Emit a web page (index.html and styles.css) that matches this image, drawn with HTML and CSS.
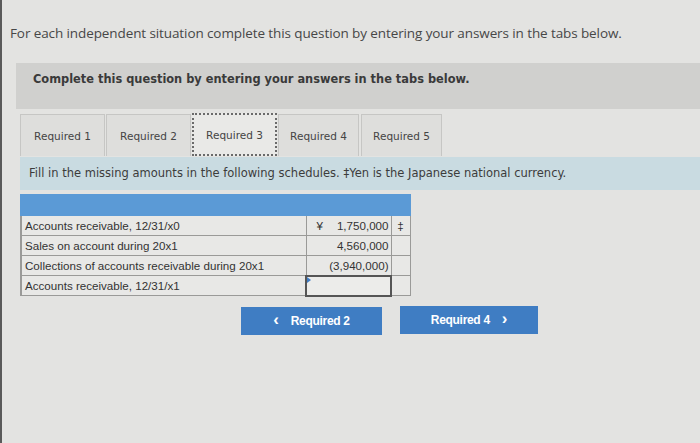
FILE: index.html
```html
<!DOCTYPE html>
<html>
<head>
<meta charset="utf-8">
<link rel="stylesheet" href="styles.css">
</head>
<body>
<div class="page">
  <p class="title">For each independent situation complete this question by entering your answers in the tabs below.</p>
  <div class="band">Complete this question by entering your answers in the tabs below.</div>
  <div class="content">
    <div class="tabs">
      <div class="tab t1">Required 1</div>
      <div class="tab t2">Required 2</div>
      <div class="tab t3 active">Required 3</div>
      <div class="tab t4">Required 4</div>
      <div class="tab t5">Required 5</div>
    </div>
    <div class="instr">Fill in the missing amounts in the following schedules. ‡Yen is the Japanese national currency.</div>
    <table class="sched">
      <tr class="head"><td colspan="3"></td></tr>
      <tr>
        <td class="label">Accounts receivable, 12/31/x0</td>
        <td class="val"><span class="cur">¥</span><span>1,750,000</span></td>
        <td class="sym">‡</td>
      </tr>
      <tr>
        <td class="label">Sales on account during 20x1</td>
        <td class="val"><span></span><span>4,560,000</span></td>
        <td class="sym"></td>
      </tr>
      <tr>
        <td class="label">Collections of accounts receivable during 20x1</td>
        <td class="val"><span></span><span>(3,940,000)</span></td>
        <td class="sym"></td>
      </tr>
      <tr>
        <td class="label">Accounts receivable, 12/31/x1</td>
        <td class="val input"><span class="tri"></span></td>
        <td class="sym"></td>
      </tr>
    </table>
    <div class="nav">
      <div class="btn prev"><span class="chev">&lsaquo;</span>Required 2</div>
      <div class="btn next">Required 4<span class="chev">&rsaquo;</span></div>
    </div>
  </div>
</div>
</body>
</html>
```

FILE: styles.css
```css
html, body {
  margin: 0;
  padding: 0;
  height: 100%;
}
body {
  background: #e3e3e1;
}
.page {
  height: 443px;
  border-left: 2px solid #5a5a5a;
  box-sizing: border-box;
  overflow: hidden;
}
.title {
  margin: 0;
  padding: 24px 0 0 8px;
  font-family: "Open Sans", sans-serif;
  font-size: 13.5px;
  letter-spacing: -0.1px;
  color: #474747;
  line-height: 18px;
}
.band {
  margin: 21px 0 0 14px;
  height: 46px;
  background: #d0d0ce;
  font-family: "DejaVu Sans", sans-serif;
  font-weight: bold;
  font-size: 11.4px;
  color: #3a3a3a;
  padding-left: 17px;
  line-height: 32px;
  box-sizing: border-box;
}
.content {
  margin-left: 18px;
}
.tabs {
  display: flex;
  margin-top: 4px;
  gap: 1px;
  height: 43px;
  align-items: flex-end;
}
.tab {
  height: 42px;
  box-sizing: border-box;
  border: 1px solid #c6c6c4;
  border-bottom: none;
  background: #dededc;
  font-family: "DejaVu Sans", sans-serif;
  font-size: 10.5px;
  color: #444;
  display: flex;
  align-items: center;
  justify-content: center;
}
.t1 { width: 85px; }
.t2 { width: 85px; }
.t3 { width: 85px; }
.t4 { width: 81px; }
.t5 { width: 81px; margin-left: 1px; }
.tab.active {
  background: #e9e9e7;
  border: 2px dotted #6a6a6a;
  height: 43px;
}
.instr {
  background: #c9dbe1;
  height: 33px;
  box-sizing: border-box;
  padding-left: 9px;
  font-family: "DejaVu Sans", sans-serif;
  font-size: 11.5px;
  color: #3c3c3c;
  line-height: 33px;
  margin-top: 1px;
  white-space: nowrap;
}
.sched {
  margin-top: 4px;
  border-collapse: collapse;
  font-family: "Liberation Sans", Arial, sans-serif;
  font-size: 11.6px;
  color: #333;
}
.sched td {
  height: 20px;
  padding: 0;
  border: 1px solid #9a9a98;
  box-sizing: border-box;
}
.sched .head td {
  background: #5b9ad6;
  border: 1px solid #5b9ad6;
  border-left: 2px solid #5b9ad6;
  height: 21px;
}
.label {
  width: 285px;
  padding-left: 3px !important;
  background: #e8e8e6;
  white-space: nowrap;
}
.sched td.label { border-left: 2px solid #9a9a98; }
.val {
  width: 85px;
  background: #e8e8e6;
  padding-right: 2px !important;
  text-align: right;
}
.val .cur {
  float: left;
  padding-left: 10px;
}
.sym {
  width: 19px;
  text-align: center;
  background: #e8e8e6;
}
.sched td.input {
  border: 2px solid #555;
  background: #ececea;
  position: relative;
}
.tri {
  position: absolute;
  left: 0;
  top: 0;
  width: 0;
  height: 0;
  border-top: 3px solid transparent;
  border-bottom: 3px solid transparent;
  border-left: 4px solid #3f7cc4;
}
.nav {
  display: flex;
  margin-top: 10px;
  margin-left: 221px;
  gap: 18px;
}
.btn {
  height: 28px;
  background: #3f7dc3;
  color: #fff;
  font-family: "Liberation Sans", Arial, sans-serif;
  font-weight: bold;
  font-size: 12px;
  letter-spacing: -0.3px;
  display: flex;
  align-items: center;
  justify-content: center;
  box-sizing: border-box;
}
.prev { width: 141px; }
.next { width: 138px; margin-top: -1px; }
.chev {
  font-size: 17px;
  font-weight: bold;
  line-height: 1;
  position: relative;
  top: -1px;
}
.prev .chev { margin-right: 12px; }
.next .chev { margin-left: 12px; }
```
